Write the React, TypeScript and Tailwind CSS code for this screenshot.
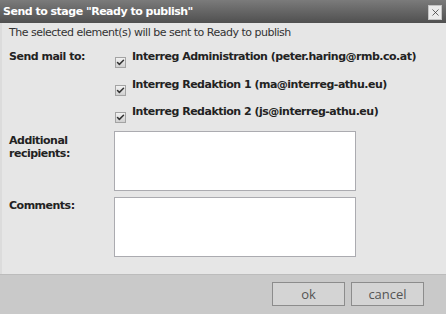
import { Check, X } from "lucide-react";

const recipients = [
  "Interreg Administration (peter.haring@rmb.co.at)",
  "Interreg Redaktion 1 (ma@interreg-athu.eu)",
  "Interreg Redaktion 2 (js@interreg-athu.eu)",
];

function Checkbox() {
  return (
    <span className="mt-[7px] flex h-[11px] w-[11px] shrink-0 items-center justify-center border border-[#a3a3a3] bg-gradient-to-b from-[#f2f2f2] to-[#d0d0d0]">
      <Check className="h-[9px] w-[9px] text-[#333]" strokeWidth={4} />
    </span>
  );
}

export default function App() {
  return (
    <div className="flex h-[314px] w-[446px] flex-col bg-[#e6e6e6] font-['DejaVu_Sans',Verdana,sans-serif] text-[11px] leading-[14px] tracking-[-0.5px] text-[#222]">
      {/* Title bar */}
      <div className="flex h-[23px] shrink-0 items-center justify-between bg-gradient-to-b from-[#7b7b7b] to-[#505050] pl-[3px] pr-[4px]">
        <span className="font-bold text-white">Send to stage "Ready to publish"</span>
        <button className="mt-[1px] flex h-[15px] w-[14px] items-center justify-center border border-[#c4c4c4] bg-[#ececec]">
          <X className="h-[11px] w-[11px] text-[#333]" strokeWidth={1.6} />
        </button>
      </div>

      {/* Body */}
      <div className="flex-1 border-l-[2px] border-[#dcdcdc] pl-[7px] pt-[3px]">
        <p className="text-[#333]">The selected element(s) will be sent to Ready to publish</p>

        <div className="mt-[10px] flex">
          <div className="w-[105px] shrink-0 font-bold">Send mail to:</div>
          <div className="flex flex-col gap-[13.5px]">
            {recipients.map((r) => (
              <label key={r} className="flex h-[14px] items-start gap-[6px] pl-[1px] font-bold">
                <Checkbox />
                <span>{r}</span>
              </label>
            ))}
          </div>
        </div>

        <div className="mt-[12px] flex">
          <div className="w-[105px] shrink-0 pt-[3px] font-bold leading-[13px]">
            Additional
            <br />
            recipients:
          </div>
          <textarea className="h-[60px] w-[242px] resize-none border border-[#ababb0] bg-white outline-none" />
        </div>

        <div className="mt-[6px] flex">
          <div className="w-[105px] shrink-0 pt-[2px] font-bold">Comments:</div>
          <textarea className="h-[60px] w-[242px] resize-none border border-[#ababb0] bg-white outline-none" />
        </div>
      </div>

      {/* Footer */}
      <div className="flex h-[40px] shrink-0 items-start justify-end gap-[6px] border-t border-[#bcbcbc] bg-[#c9c9c9] pr-[22px] pt-[7px] font-['Open_Sans',sans-serif] text-[13px] tracking-normal text-[#555]">
        <button className="h-[24px] w-[73px] border border-[#8c8c8c] bg-[#d4d4d4]">ok</button>
        <button className="h-[24px] w-[73px] border border-[#8c8c8c] bg-[#d4d4d4]">cancel</button>
      </div>
    </div>
  );
}
